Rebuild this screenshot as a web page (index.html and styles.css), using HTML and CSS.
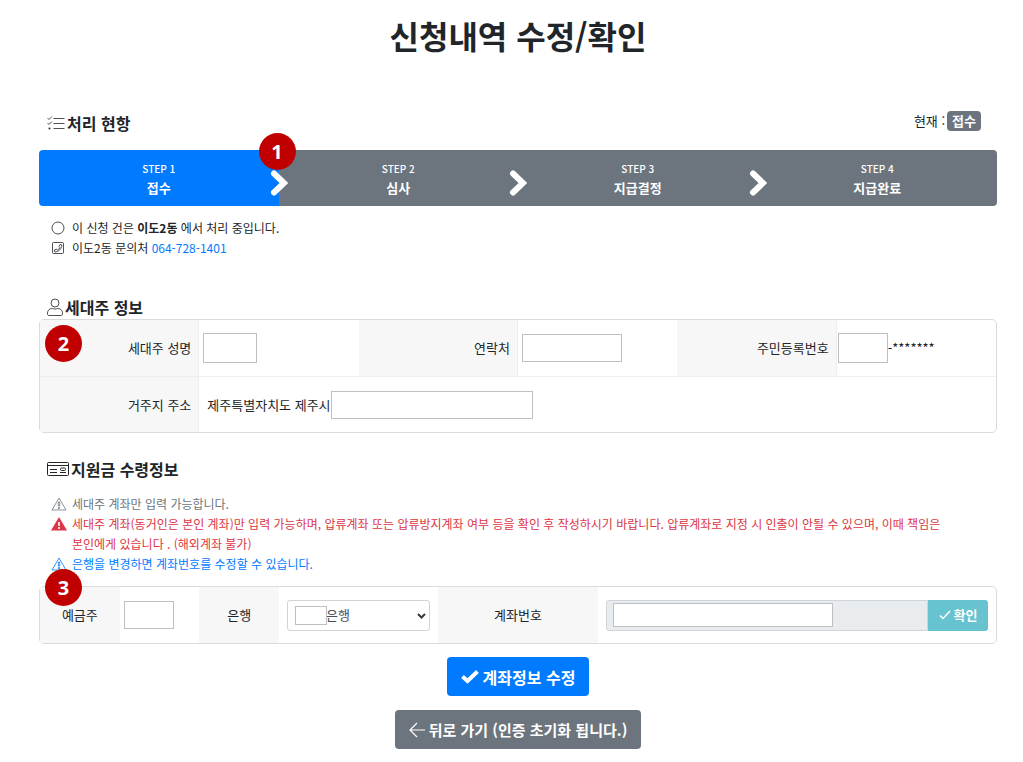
FILE: index.html
```
<!DOCTYPE html>
<html lang="ko">

<head>
    <meta charset="UTF-8">
    <meta name="viewport" content="width=device-width, initial-scale=1.0">
    <title>신청내역 수정/확인</title>
    <link rel="stylesheet" href="styles.css">
</head>

<body>

    <main class="container">
        <h1>신청내역 수정/확인</h1>

        <section class="progress">
            <div class="progress-head">
                <h2>
                    <svg class="icon" width="18" height="16" viewBox="0 0 18 16" fill="none" stroke="currentColor" stroke-width="0.800">
                        <path d="M.5 3l1.500 1.500L5 1.500M.5 8l1.500 1.500L5 6.500M6.500 3.500h11M6.500 8.500h11M6.500 13.500h11" />
                        <circle cx="2.500" cy="13.500" r="1" fill="currentColor" stroke="none" />
                    </svg>
                    처리 현항
                </h2>
                <p class="current">현재 : <span class="badge">접수</span></p>
            </div>

            <ol class="steps">
                <li class="step active">
                    <small>STEP 1</small>
                    <strong>접수</strong>
                    <svg class="arrow" width="18" height="28" viewBox="0 0 18 28"><path d="M4 4.500l10 9.500L4 23.500" /></svg>
                    <span class="marker marker-step">1</span>
                </li>
                <li class="step">
                    <small>STEP 2</small>
                    <strong>심사</strong>
                    <svg class="arrow" width="18" height="28" viewBox="0 0 18 28"><path d="M4 4.500l10 9.500L4 23.500" /></svg>
                </li>
                <li class="step">
                    <small>STEP 3</small>
                    <strong>지급결정</strong>
                    <svg class="arrow" width="18" height="28" viewBox="0 0 18 28"><path d="M4 4.500l10 9.500L4 23.500" /></svg>
                </li>
                <li class="step">
                    <small>STEP 4</small>
                    <strong>지급완료</strong>
                </li>
            </ol>

            <ul class="notes">
                <li>
                    <svg class="icon" width="14" height="14" viewBox="0 0 14 14" fill="none" stroke="currentColor" stroke-width="0.800"><circle cx="7" cy="7" r="6" /></svg>
                    <span>이 신청 건은 <b>이도2동</b> 에서 처리 중입니다.</span>
                </li>
                <li>
                    <svg class="icon" width="14" height="14" viewBox="0 0 14 14" fill="none" stroke="currentColor" stroke-width="0.800">
                        <rect x="1.500" y="1.500" width="11" height="11" rx="1" />
                        <path d="M9 3.500l1.800.4c0 4-3 7-7 7L3.400 9l2-.9.900 1.100C7.600 8.600 8.300 7.800 8.900 6.500L7.900 5.500z" />
                    </svg>
                    <span>이도2동 문의처 <a href="tel:064-728-1401">064-728-1401</a></span>
                </li>
            </ul>
        </section>

        <section class="householder">
            <h2>
                <svg class="icon" width="16" height="18" viewBox="0 0 16 18" fill="none" stroke="currentColor" stroke-width="0.800">
                    <circle cx="8" cy="5" r="4" />
                    <path d="M5 10.500C2.500 10.500.5 12.500.5 15v1c0 .8.700 1.500 1.500 1.500h12c.8 0 1.500-.7 1.500-1.500v-1c0-2.500-2-4.500-4.500-4.500-1 0-1.500.5-3 .5s-2-.5-3-.5z" />
                </svg>
                세대주 정보
            </h2>
            <div class="card info">
                <span class="marker marker-card">2</span>
                <label class="th" for="name">세대주 성명</label>
                <div class="td"><input type="text" id="name" class="box box-name"></div>
                <label class="th" for="phone">연락처</label>
                <div class="td"><input type="text" id="phone" class="box box-phone"></div>
                <label class="th" for="jumin">주민등록번호</label>
                <div class="td flush"><input type="text" id="jumin" class="box box-jumin">-*******</div>
                <label class="th line" for="address">거주지 주소</label>
                <div class="td line address">제주특별자치도 제주시 <input type="text" id="address" class="box box-address"></div>
            </div>
        </section>

        <section class="account">
            <h2>
                <svg class="icon" width="22" height="16" viewBox="0 0 22 16" fill="none" stroke="currentColor">
                    <rect x="0.500" y="1.500" width="21" height="13" rx="1" />
                    <path d="M0 4.500h22M3 8.500h7M3 11.500h7M13 11.500h6" />
                    <rect x="13.500" y="7" width="5" height="2.500" rx="1" />
                </svg>
                지원금 수령정보
            </h2>
            <ul class="notes">
                <li class="muted">
                    <svg class="icon" width="16" height="14" viewBox="0 0 16 14" fill="none" stroke="currentColor" stroke-width="0.800"><path d="M8 1l7 12H1zM7.300 5h1.400v4H7.300zM7.300 10.500h1.400v1H7.300z" /></svg>
                    <span>세대주 계좌만 입력 가능합니다.</span>
                </li>
                <li class="danger">
                    <svg class="icon" width="16" height="14" viewBox="0 0 16 14"><path d="M8 0L16 13.500H0z" fill="currentColor" /><path d="M8 5v4M8 10v2" stroke="#fff" stroke-width="1.600" /></svg>
                    <span>세대주 계좌(동거인은 본인 계좌)만 입력 가능하며, 압류계좌 또는 압류방지계좌 여부 등을 확인 후 작성하시기 바랍니다. 압류계좌로 지정 시 인출이 안될 수 있으며, 이때 책임은 본인에게 있습니다 . (해외계좌 불가)</span>
                </li>
                <li class="primary">
                    <svg class="icon" width="16" height="14" viewBox="0 0 16 14" fill="none" stroke="currentColor" stroke-width="0.800"><path d="M8 1l7 12H1zM7.300 5h1.400v4H7.300zM7.300 10.500h1.400v1H7.300z" /></svg>
                    <span>은행을 변경하면 계좌번호를 수정할 수 있습니다.</span>
                </li>
            </ul>
            <div class="card bank">
                <span class="marker marker-bank">3</span>
                <label class="th" for="owner">예금주</label>
                <div class="td"><input type="text" id="owner" class="box box-owner"></div>
                <label class="th" for="bank">은행</label>
                <div class="td wide">
                    <div class="select-wrap">
                        <select id="bank">
                            <option>은행</option>
                        </select>
                        <span class="mask"></span>
                        <svg class="caret" width="9" height="6" viewBox="0 0 9 6"><path d="M1 1l3.500 3.500L8 1" /></svg>
                    </div>
                </div>
                <label class="th" for="number">계좌번호</label>
                <div class="td wide">
                    <div class="input-group">
                        <div class="readonly"><input type="text" id="number" class="box box-number"></div>
                        <button type="button" class="btn-check">
                            <svg width="12" height="10" viewBox="0 0 12 10" fill="none" stroke="currentColor" stroke-width="1.500"><path d="M1 5.500L4 8.500L11 1" /></svg>
                            확인
                        </button>
                    </div>
                </div>
            </div>
        </section>

        <div class="buttons">
            <button type="button" class="btn btn-primary">
                <svg width="18" height="14" viewBox="0 0 18 14" fill="none" stroke="currentColor" stroke-width="4"><path d="M1.500 6.500L6.500 11L16.500 1.500" /></svg>
                계좌정보 수정
            </button>
            <button type="button" class="btn btn-secondary">
                <svg width="16" height="16" viewBox="0 0 16 16" fill="none" stroke="currentColor" stroke-width="1.200"><path d="M8 1L1 8l7 7M1 8h15" /></svg>
                뒤로 가기 (인증 초기화 됩니다.)
            </button>
        </div>
    </main>

</body>

</html>
```
FILE: styles.css
```
* {
    box-sizing: border-box;
}

body {
    margin: 0;
    background: #fff;
    color: #212529;
    font-family: "Noto Sans CJK KR", sans-serif;
    font-size: 13px;
    line-height: 20px;
    word-break: keep-all;
}

.container {
    padding: 11px 26px 13px 39px;
}

h1 {
    margin: 0 0 52px;
    font-size: 32px;
    line-height: 48px;
    font-weight: bold;
    text-align: center;
}

h2 {
    display: flex;
    align-items: center;
    gap: 2px;
    margin: 0;
    padding-left: 8px;
    font-size: 16px;
    line-height: 24px;
    font-weight: bold;
}

.icon {
    flex: none;
}

/* progress */
.progress-head {
    display: flex;
    justify-content: space-between;
    align-items: flex-start;
    padding-bottom: 15px;
}

.current {
    display: flex;
    align-items: center;
    gap: 2px;
    margin: 0;
    padding-right: 16px;
}

.badge {
    padding: 0 5px;
    border-radius: 4px;
    background: #6c757d;
    color: #fff;
    font-weight: bold;
}

.steps {
    display: flex;
    list-style: none;
    margin: 0;
    padding: 0;
}

.step {
    position: relative;
    flex: 1;
    display: flex;
    flex-direction: column;
    align-items: center;
    padding: 9px 0;
    background: #6c757d;
    color: #fff;
    line-height: 19px;
}

.step:first-child {
    border-radius: 4px 0 0 4px;
}

.step:last-child {
    border-radius: 0 4px 4px 0;
}

.step.active {
    background: #007bff;
}

.step small {
    font-size: 10px;
    font-weight: 500;
}

.arrow {
    position: absolute;
    z-index: 1;
    right: -9px;
    top: 19px;
    fill: none;
    stroke: #fff;
    stroke-width: 6;
    stroke-linecap: round;
}

.marker {
    position: absolute;
    z-index: 2;
    width: 37px;
    height: 37px;
    border-radius: 50%;
    background: #c00000;
    color: #fff;
    font-family: "Open Sans", sans-serif;
    font-size: 20px;
    line-height: 37px;
    font-weight: bold;
    text-align: center;
}

.marker-step {
    right: -17px;
    top: -17px;
}

.marker-card {
    left: 5px;
    top: 5px;
}

.marker-bank {
    left: 5px;
    top: -18px;
}

.notes {
    list-style: none;
    margin: 12px 0 0;
    padding: 0 14px 0 12px;
    font-size: 12px;
}

.notes li {
    display: grid;
    grid-template-columns: 16px 1fr;
    gap: 5px;
}

.notes .icon {
    margin-top: 3px;
}

.notes a {
    color: #007bff;
    text-decoration: none;
}

.muted {
    color: #6c757d;
}

.danger {
    color: #dc3545;
}

.primary {
    color: #007bff;
}

/* tables */
.householder {
    margin-top: 37px;
}

.account {
    margin-top: 24px;
}

.account .notes {
    margin: 13px 0 12px;
}

.card {
    position: relative;
    display: grid;
    border: 1px solid #d9dbdd;
    border-radius: 5px;
}

.info {
    grid-template-columns: repeat(6, 1fr);
}

.bank {
    grid-template-columns: 1fr 1fr 1fr 2fr 2fr 5fr;
}

.th,
.td {
    display: flex;
    align-items: center;
    min-width: 0;
    min-height: 56px;
    padding: 0 4px;
}

.th {
    background: #f7f7f7;
}

.info .th {
    justify-content: flex-end;
    padding-right: 7px;
    border-right: 1px solid #eee;
}

.bank .th {
    justify-content: center;
}

.line {
    border-top: 1px solid #eee;
}

.info .flush {
    padding: 0 1px;
}

.address {
    grid-column: 2 / -1;
    padding-left: 8px;
}

.bank .wide {
    padding: 0 8px;
}

.box {
    height: 28px;
    padding: 0 4px;
    border: 1px solid #bfbfbf;
    background: #fff;
    font: inherit;
}

.box-name {
    width: 54px;
    height: 30px;
}

.box-phone {
    width: 100px;
}

.box-jumin {
    width: 50px;
    height: 30px;
}

.box-address {
    width: 202px;
}

.box-owner {
    width: 50px;
}

.box-number {
    width: 220px;
    height: 24px;
}

.select-wrap {
    position: relative;
    width: 100%;
}

select {
    width: 100%;
    height: 31px;
    padding: 0 20px 0 38px;
    border: 1px solid #ced4da;
    border-radius: 3px;
    background: #fff;
    color: #495057;
    font: inherit;
    appearance: none;
}

.mask {
    position: absolute;
    left: 8px;
    top: 6px;
    width: 32px;
    height: 19px;
    border: 1px solid #bfbfbf;
    background: #fff;
    pointer-events: none;
}

.caret {
    position: absolute;
    right: 4px;
    top: 13px;
    fill: none;
    stroke: #343a40;
    stroke-width: 2;
    pointer-events: none;
}

.input-group {
    display: flex;
    width: 100%;
    height: 31px;
}

.readonly {
    flex: 1;
    display: flex;
    align-items: center;
    padding-left: 6px;
    border: 1px solid #ced4da;
    border-radius: 3px 0 0 3px;
    background: #e9ecef;
}

.btn-check {
    display: flex;
    align-items: center;
    justify-content: center;
    gap: 3px;
    width: 60px;
    padding: 0;
    border: 0;
    border-radius: 0 3px 3px 0;
    background: #67c3d0;
    color: #fff;
    font: inherit;
    font-weight: bold;
}

/* buttons */
.buttons {
    display: flex;
    flex-direction: column;
    align-items: center;
    gap: 14px;
    margin-top: 13px;
}

.btn {
    display: flex;
    align-items: center;
    gap: 4px;
    height: 39px;
    padding: 0 14px;
    border: 0;
    border-radius: 4px;
    color: #fff;
    font: inherit;
    font-weight: bold;
}

.btn-primary {
    background: #007bff;
    font-size: 16px;
}

.btn-secondary {
    background: #6c757d;
    font-size: 15px;
}
```
